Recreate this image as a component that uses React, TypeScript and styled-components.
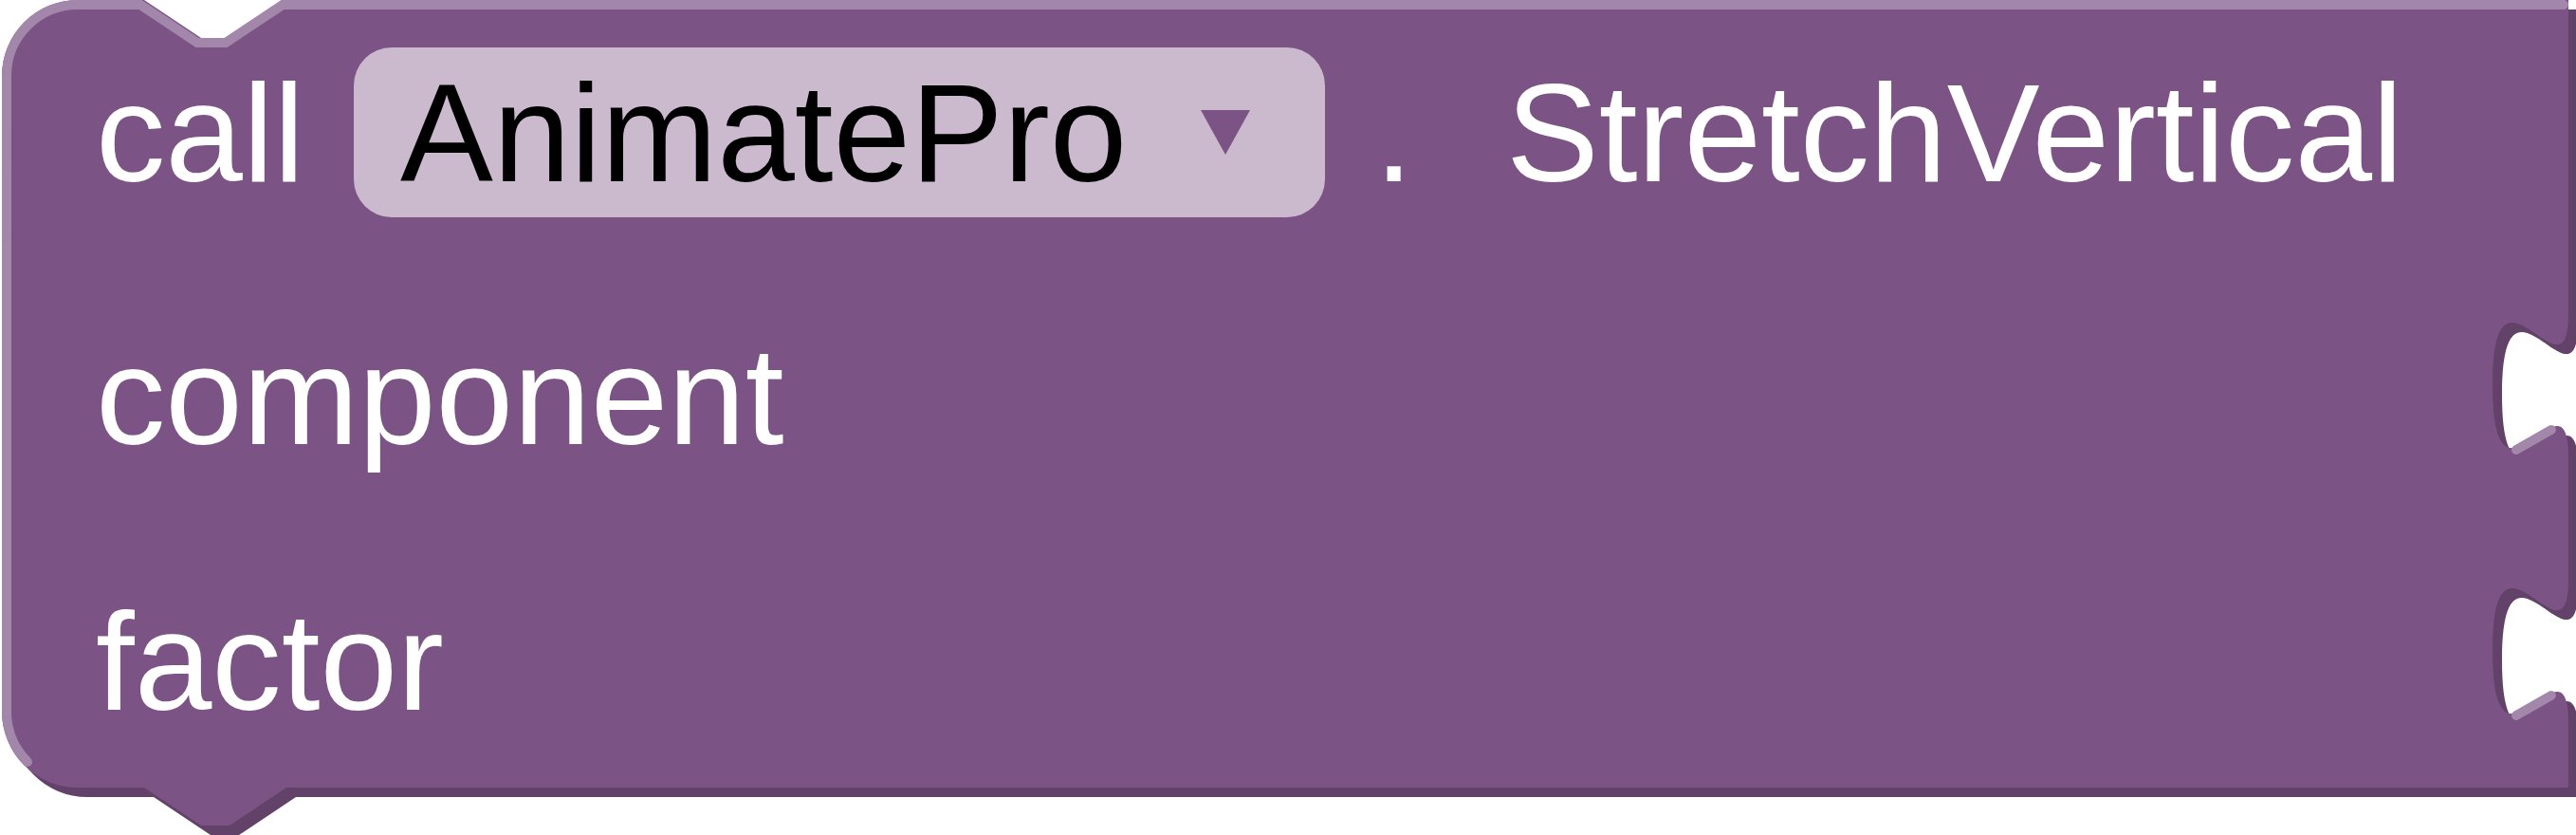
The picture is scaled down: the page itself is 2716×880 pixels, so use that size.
import React from 'react';
import styled, { createGlobalStyle } from 'styled-components';

const COLOR = '#7C5385';
const LIGHT = '#A387AA';
const DARK = '#63426A';
const FIELD_BG = '#CBB9CE';

const GlobalStyle = createGlobalStyle`
  html, body {
    margin: 0;
    padding: 0;
    background: #ffffff;
  }
  body {
    font-family: "Liberation Sans", Arial, sans-serif;
  }
`;

const Canvas = styled.div`
  position: relative;
  width: 2716px;
  height: 880px;
  overflow: hidden;
  background: #ffffff;
`;

const Shape = styled.svg`
  position: absolute;
  left: 0;
  top: 0;
  width: 2716px;
  height: 880px;
`;

const Content = styled.div`
  position: relative;
  display: flex;
  flex-direction: column;
  padding: 50px 0 0 101px;
`;

const HeaderRow = styled.div`
  display: flex;
  align-items: center;
  height: 179px;
`;

const InputRow = styled.div`
  display: flex;
  align-items: flex-start;
  height: 280px;
  padding-top: 106px;
  box-sizing: border-box;
`;

const Label = styled.span<{ $gap?: number; $dark?: boolean }>`
  font-family: "Liberation Sans", Arial, sans-serif;
  font-size: 146.67px;
  line-height: 164px;
  color: ${(p) => (p.$dark ? '#000000' : '#ffffff')};
  white-space: pre;
  margin-left: ${(p) => p.$gap ?? 0}px;
`;

const Dropdown = styled.div`
  display: flex;
  align-items: center;
  height: 179px;
  box-sizing: border-box;
  padding: 0 79px 0 49px;
  margin-left: 52px;
  background: ${FIELD_BG};
  border-radius: 40px;
`;

const Arrow = styled.span`
  width: 0;
  height: 0;
  margin-left: 78px;
  border-left: 26px solid transparent;
  border-right: 26px solid transparent;
  border-top: 47px solid ${COLOR};
`;

const W = 270.6;
const TABS = [33.1, 61.1];
const TAB_DOWN = 'c 0,10 -8,-8 -8,7.5 s 8,-2.5 8,7.5';

const mainPath =
  `M 0,8 A 8,8 0 0,1 8,0 H 15 l 6,4 3,0 6,-4 H ${W} ` +
  TABS.map((y) => `V ${y} ${TAB_DOWN}`).join(' ') +
  ` V 83 H 30 l -6,4 -3,0 -6,-4 H 8 A 8,8 0 0,1 0,75 Z`;

const highlightPath =
  `M 2.7,80.3 A 7.5,7.5 0 0,1 0.5,75 V 8 A 7.5,7.5 0 0,1 8,0.5 H 14.6 l 6,4 3,0 6,-4 H ${W - 0.5} ` +
  TABS.map((y) => `M ${W - 5.5},${y + 14.3} l 3.68,-2.1`).join(' ');

const BlockShape: React.FC = () => (
  <Shape viewBox="0 0 2716 880" xmlns="http://www.w3.org/2000/svg">
    <g transform="translate(2,0) scale(10)">
      <path d={mainPath} fill={DARK} transform="translate(1,1)" />
      <path d={mainPath} fill={COLOR} />
      <path d={highlightPath} fill="none" stroke={LIGHT} strokeWidth={1} strokeLinecap="round" />
    </g>
  </Shape>
);

export default function App() {
  return (
    <>
      <GlobalStyle />
      <Canvas>
        <BlockShape />
        <Content>
          <HeaderRow>
            <Label>call</Label>
            <Dropdown>
              <Label $dark>AnimatePro</Label>
              <Arrow />
            </Dropdown>
            <Label $gap={52}>.</Label>
            <Label $gap={98}>StretchVertical</Label>
          </HeaderRow>
          <InputRow>
            <Label>component</Label>
          </InputRow>
          <InputRow>
            <Label>factor</Label>
          </InputRow>
        </Content>
      </Canvas>
    </>
  );
}
